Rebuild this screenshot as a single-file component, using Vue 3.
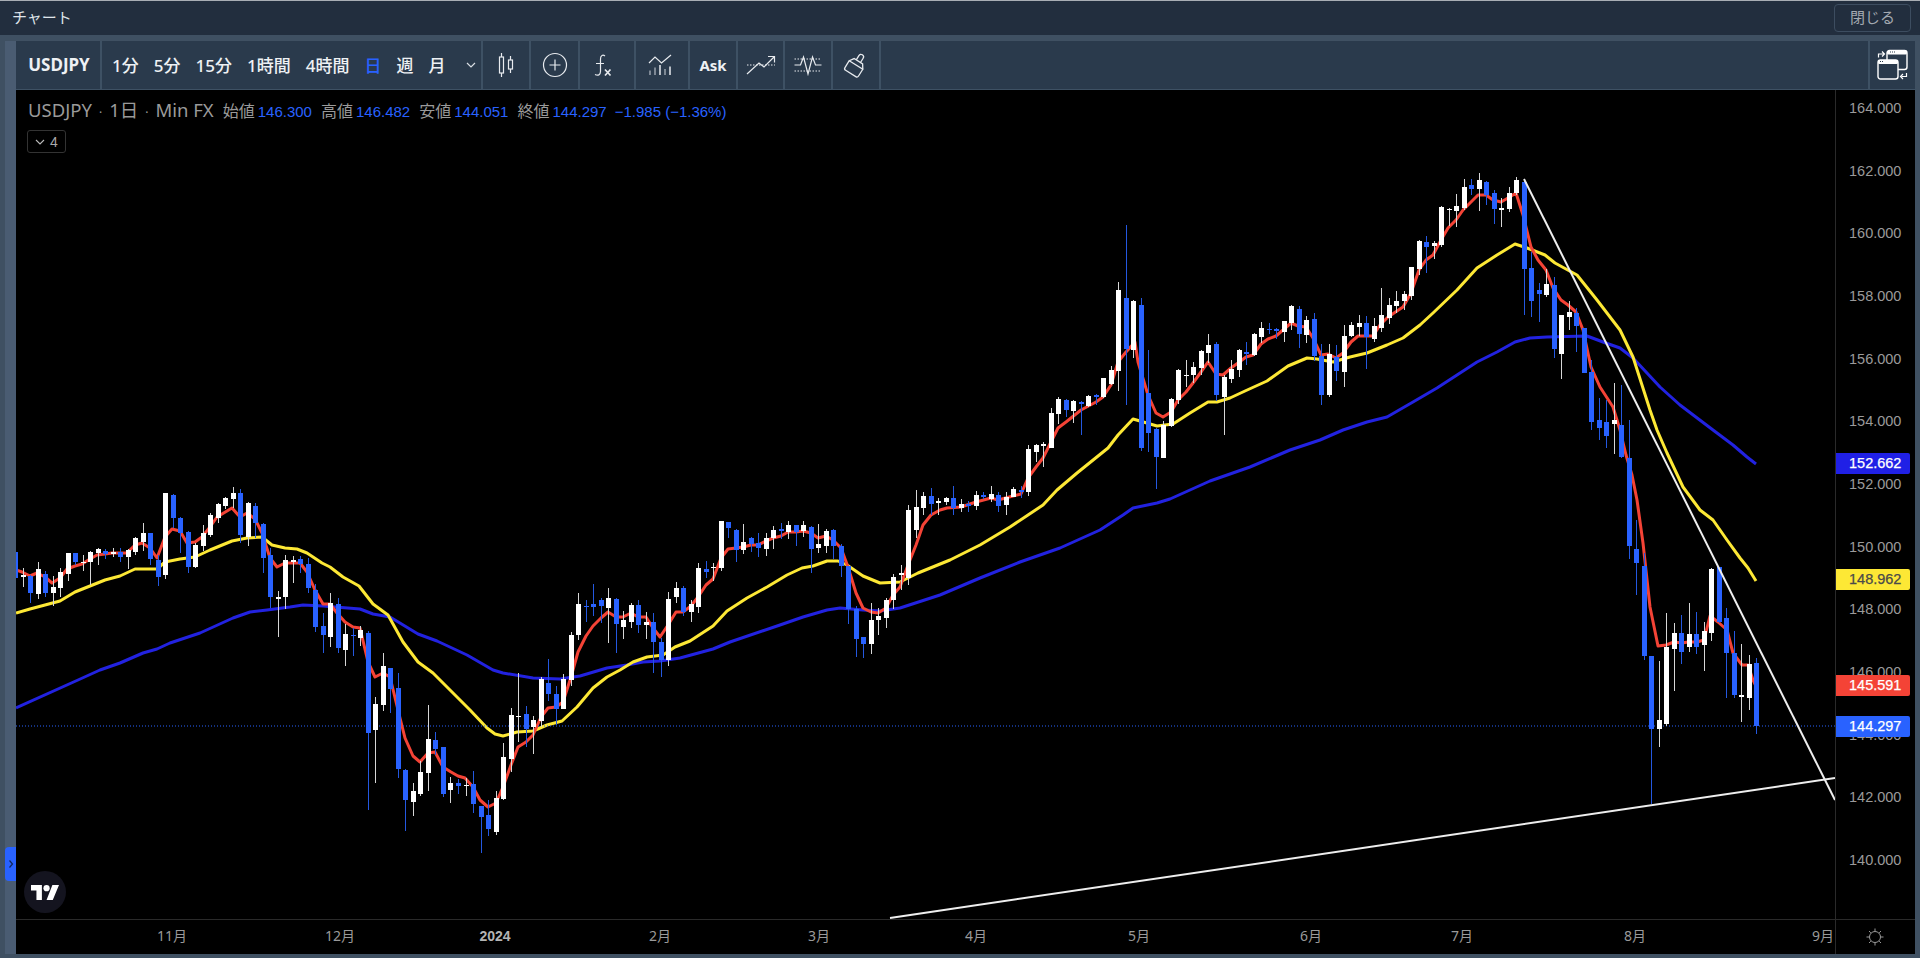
<template>
  <div class="app">
    <header class="titlebar">
      <span class="title">チャート</span>
      <button class="close-btn">閉じる</button>
    </header>

    <div class="frame">
      <div class="side">
        <div class="handle">
          <svg width="6" height="12" viewBox="0 0 6 12"><path d="M1.5 2.5 L4.5 6 L1.5 9.5" fill="none" stroke="#10255c" stroke-width="1.2" /></svg>
        </div>
      </div>

      <div class="main">
        <div class="toolbar">
          <div class="tb symbol">USDJPY</div>
          <div class="tb intervals">
            <span v-for="iv in intervals" :key="iv" :class="{ active: iv === '日' }">{{ iv }}</span>
            <svg class="chev" width="10" height="6" viewBox="0 0 10 6"><path d="M1 1 L5 5 L9 1" fill="none" stroke="#d8dde3" stroke-width="1.2" /></svg>
          </div>
          <div class="tb w48">
            <svg width="20" height="28" viewBox="0 0 20 28" class="ico">
              <path d="M5.5 2 V6 M5.5 22 V26 M14.5 5 V9 M14.5 18 V22" />
              <rect x="3.5" y="6" width="4" height="16" />
              <rect x="12.5" y="9" width="4" height="9" />
            </svg>
          </div>
          <div class="tb w49">
            <svg width="26" height="26" viewBox="0 0 26 26" class="ico">
              <circle cx="13" cy="13" r="11.5" />
              <path d="M13 7.5 V18.5 M7.5 13 H18.5" />
            </svg>
          </div>
          <div class="tb w56 fx-cell">
            <svg width="18" height="23" viewBox="0 0 18 23" class="ico">
              <path d="M11 2 C9 0.5 6.5 1 6.5 5 V17.5 C6.5 21 4 22 1 20.5 M2 9.5 H10" />
              <path d="M11 15.5 L16.5 21.5 M16.5 15.5 L11 21.5" stroke-width="1.7" />
            </svg>
          </div>
          <div class="tb w54 ind-cell">
            <svg width="24" height="22" viewBox="0 0 24 22" class="ico">
              <path d="M1 9 L7 3 L13.5 9 L23 1" />
              <path d="M2 16.5 V21 M7 13.5 V21" stroke="#9aa3ad" stroke-width="1.5" />
              <path d="M12 11 V21" stroke-width="1.5" />
              <path d="M17 15 V21" stroke="#9aa3ad" stroke-width="1.5" />
              <path d="M22 12.5 V21" stroke-width="1.5" />
            </svg>
          </div>
          <div class="tb w48 ask">Ask</div>
          <div class="tb w47">
            <svg width="30" height="20" viewBox="0 0 30 20" class="ico">
              <path d="M1 10 H29" stroke-dasharray="1.5 1.5" stroke-width="1" />
              <path d="M1 19 L13 8 L18 12 L28 2 M22 1.5 H28.5 V7.5" />
            </svg>
          </div>
          <div class="tb w48">
            <svg width="28" height="22" viewBox="0 0 28 22" class="ico">
              <path d="M0.5 5 H27.5 M0.5 17 H27.5" stroke-dasharray="1.5 1.5" stroke-width="1" />
              <path d="M0.5 11 H6.5 L9.5 3 L14 20 L18.5 3 L21.5 11 H27.5" />
            </svg>
          </div>
          <div class="tb w48">
            <svg width="26" height="28" viewBox="0 0 26 28" class="ico">
              <g transform="rotate(32 13 14)" stroke-width="1.3">
                <path d="M5 14 H21 V22 Q21 24 19 24 H7 Q5 24 5 22 Z" />
                <path d="M5 14 L8 9.5 H18 L21 14" />
                <path d="M10.5 9.5 V4.5 Q10.5 2 13 2 Q15.5 2 15.5 4.5 V9.5" />
              </g>
            </svg>
          </div>
          <div class="tb-fill"></div>
          <div class="tb layout">
            <svg width="32" height="32" viewBox="0 0 32 32">
              <rect x="10" y="1.5" width="20" height="19" rx="2.5" fill="#2a3a4c" stroke="#fff" stroke-width="1.4" />
              <rect x="10" y="1.5" width="20" height="4" rx="1.5" fill="#fff" />
              <rect x="1" y="11" width="20" height="19" rx="2.5" fill="#2a3a4c" stroke="#fff" stroke-width="1.4" />
              <rect x="1" y="11" width="20" height="4" rx="1.5" fill="#fff" />
              <path d="M3 12.5 H7 M13 3 H18" stroke="#2a3a4c" stroke-width="1" stroke-dasharray="1 1" />
              <path d="M1.5 8.5 V5 H6.5 M5 2.5 L7.5 5 L5 7.5" fill="none" stroke="#fff" stroke-width="1.2" />
              <path d="M29.5 24 V27.5 H24.5 M26 25 L23.5 27.5 L26 30" fill="none" stroke="#fff" stroke-width="1.2" />
            </svg>
          </div>
        </div>

        <div class="chart">
          <div class="pane">
            <svg class="plot" width="1819" height="829" viewBox="16 90 1819 829">
              <path :d="line(maSlow)" class="ma" stroke="#2222e0" />
              <path :d="line(maMid)" class="ma" stroke="#fde835" />
              <path :d="line(maFast)" class="ma" stroke="#f44336" />
              <path d="M16 726 H1835" stroke="#2962ff" stroke-width="1" stroke-dasharray="1 2" />
              <g v-for="c in candles" :key="c.i" shape-rendering="crispEdges">
                <rect :x="c.x" :y="c.hi" width="1" :height="c.lo - c.hi" :fill="c.up ? '#d6d6d6' : '#2458e0'" />
                <rect :x="c.x - 2" :y="c.top" width="5" :height="c.bot - c.top" :fill="c.up ? '#ffffff' : '#2962ff'" />
              </g>
              <path d="M1524 179 L1835 800" stroke="#eee" stroke-width="2" />
              <path d="M890 918 L1835 778" stroke="#eee" stroke-width="2" />
            </svg>

            <div class="legend">
              <span class="sym">USDJPY</span><i>·</i><span class="sym">1日</span><i>·</i><span class="sym">Min FX</span>
              <template v-for="v in ohlc" :key="v.k">
                <span class="k">{{ v.k }}</span><span class="v">{{ v.v }}</span>
              </template>
              <span class="v chg">−1.985 (−1.36%)</span>
            </div>
            <div class="collapse">
              <svg width="10" height="6" viewBox="0 0 10 6"><path d="M1 1 L5 5 L9 1" fill="none" stroke="#bbb" stroke-width="1.1" /></svg>
              <span>4</span>
            </div>

            <div class="tv-logo">
              <svg width="28" height="15" viewBox="0 0 36 19">
                <path d="M14 19 H7 V7 H0 V0 H14 Z M28 19 H20 L27.5 0 H36 Z" fill="#fff" />
                <circle cx="20" cy="4" r="4" fill="#fff" />
              </svg>
            </div>
          </div>

          <div class="price-axis">
            <span v-for="p in ticks" :key="p" class="tick" :style="{ top: priceTop(p) + 'px' }">{{ p.toFixed(3) }}</span>
            <span v-for="t in tags" :key="t.label" class="tag" :style="{ top: t.y + 'px', background: t.bg, color: t.fg }">{{ t.label }}</span>
          </div>

          <div class="time-axis">
            <span v-for="m in months" :key="m.t" :class="{ year: m.year }" :style="{ left: (m.x - 16) + 'px' }">{{ m.t }}</span>
          </div>

          <div class="corner">
            <svg width="20" height="20" viewBox="0 0 20 20" fill="none" stroke="#9a9a9a" stroke-width="1">
              <circle cx="10" cy="10" r="5.5" />
              <path d="M10 1.5 V4 M10 16 V18.5 M1.5 10 H4 M16 10 H18.5 M4 4 L5.8 5.8 M14.2 14.2 L16 16 M16 4 L14.2 5.8 M5.8 14.2 L4 16" />
            </svg>
          </div>
        </div>
      </div>
    </div>
  </div>
</template>

<script setup>
const intervals = ['1分', '5分', '15分', '1時間', '4時間', '日', '週', '月']

const ohlc = [
  { k: '始値', v: '146.300' },
  { k: '高値', v: '146.482' },
  { k: '安値', v: '144.051' },
  { k: '終値', v: '144.297' }
]

const ticks = [164, 162, 160, 158, 156, 154, 152, 150, 148, 146, 144, 142, 140]
const priceTop = (p) => 108 + (164 - p) * 31.33 - 90 - 9

const tags = [
  { label: '152.662', y: 363, bg: '#2020e6', fg: '#fff' },
  { label: '148.962', y: 479, bg: '#fde835', fg: '#4a4a4a' },
  { label: '145.591', y: 585, bg: '#f44336', fg: '#fff' },
  { label: '144.297', y: 626, bg: '#2962ff', fg: '#fff' }
]

const months = [
  { t: '11月', x: 172 },
  { t: '12月', x: 340 },
  { t: '2024', x: 495, year: true },
  { t: '2月', x: 660 },
  { t: '3月', x: 819 },
  { t: '4月', x: 976 },
  { t: '5月', x: 1139 },
  { t: '6月', x: 1311 },
  { t: '7月', x: 1462 },
  { t: '8月', x: 1635 },
  { t: '9月', x: 1823 }
]

// rows measured at 3x: [up, top, bottom, high, low], y = y0 + value / 3
const seg = (y0, rows) => rows.map(r => ({
  up: r[0] === 1,
  top: y0 + r[1] / 3,
  bot: y0 + Math.max(r[2], r[1] + 3) / 3,
  hi: y0 + r[3] / 3,
  lo: y0 + r[4] / 3
}))

const raw = [
  ...seg(480, [
    [0,215,295,215,295],[1,284,292,265,322],[0,287,340,285,368],[1,266,343,245,358],[0,282,340,272,350],
    [1,320,340,288,377],[1,275,325,265,352],[1,218,283,218,302],[0,218,245,218,255],[1,245,250,224,272],
    [1,215,247,212,314],[1,206,220,205,254],[0,212,222,208,236],[1,215,223,203,232],[0,215,230,203,245],
    [1,209,232,207,268],[1,175,215,172,224],[1,160,185,128,212],[0,160,238,160,255],[0,240,290,225,318],
    [1,40,286,40,296],[0,46,115,42,145],[0,113,158,110,220],[0,155,262,152,278],[1,194,260,190,265],
    [1,160,197,136,212],[1,105,166,100,170],[1,73,115,68,130],[1,55,77,50,87],[1,38,58,22,85],
    [0,40,165,28,190],[1,70,172,66,197],[0,77,130,68,175],[0,133,235,128,278],[0,224,350,205,385],
    [1,352,356,332,470],[1,241,352,224,388],[1,241,246,228,308],
    [0,237,253,228,280],[0,251,325,235,340],[0,330,440,312,456],[0,437,464,398,518],[1,368,470,340,500],
    [0,372,503,355,518],[1,461,509,432,557],[0,465,469,445,528],[1,449,473,437,497],[0,459,758,452,990],
    [1,672,749,650,908],[1,558,674,520,692],[0,564,627,563,698],[0,624,866,578,893],[0,870,960,868,1053],
    [1,933,965,908,1008],[1,876,942,842,948],[1,777,878,675,933],[0,780,807,755,825],[0,801,942,800,950],
    [1,909,930,890,968],[0,909,917,897,942],[1,915,919,895,948],[0,912,972,872,998],[0,978,1010,978,1118],
    [0,1005,1047,960,1067],[1,954,1056,932,1065],[1,831,957,790,960],[1,704,837,684,875],[1,708,712,578,786],
    [0,702,747,678,800],[1,720,742,708,822],[1,596,722,592,740],[0,609,641,537,662],[0,642,686,618,735],
    [1,597,686,582,687],[1,464,601,455,617],[1,371,465,338,480]
  ]),
  ...seg(500, [
    [0,317,320,300,365],[0,311,320,253,348],[0,299,317,295,368],[1,293,323,263,428],[0,297,371,295,458],
    [1,360,380,332,418],[1,314,365,310,383],[0,315,376,300,400],[1,365,376,335,418],[0,366,425,338,518],
    [0,425,480,415,530],[1,296,480,275,497],[1,264,290,245,310],[0,264,336,258,347],[1,311,337,300,365],
    [1,203,320,190,338],[0,206,215,182,235],[1,200,205,190,242],[1,62,203,62,212],[0,65,85,65,113],
    [0,90,150,88,185],[1,125,149,73,162],[0,113,133,112,155],[0,128,143,100,172],[1,113,147,100,168],
    [1,89,115,77,147],[0,88,93,68,116],[1,74,95,62,116],[0,74,97,74,137],[1,74,93,63,110],
    [0,80,148,78,218],[1,131,143,73,158],[1,92,139,87,158],[0,90,139,88,177],[0,137,197,133,230],
    [0,198,328,198,372],[0,327,416,318,472],[0,411,431,410,474],[1,360,431,310,462],[1,347,361,325,405],
    [1,299,355,295,384],[1,231,301,222,328],[1,218,226,195,270],[1,30,234,15,255]
  ]),
  ...seg(215, [
    [1,875,945,826,970],[1,842,880,832,900],[0,842,868,820,900],[1,859,864,850,900],[1,848,862,845,870],
    [0,848,880,812,900],[1,866,879,852,890],[0,866,872,858,890],[1,839,872,827,885],[0,840,847,830,852],
    [1,836,853,812,860],[0,840,873,830,892],[1,846,871,832,900],[1,821,845,815,845],[0,824,832,812,850],
    [1,703,832,690,842],[1,691,711,686,740],[1,687,692,680,755],[1,595,698,580,700],[1,552,598,545,628],
    [0,556,585,552,607],[1,559,589,555,625],[0,560,566,558,660],[1,542,574,540,575],[0,540,545,538,570],
    [1,490,547,488,548],[1,466,506,452,510],[1,226,468,202,528],[0,250,403,30,570],[1,259,405,255,430],
    [0,270,700,248,708],[0,533,655,406,712],[0,643,727,640,823],[1,630,730,618,730],[1,553,634,550,636],
    [1,466,555,463,568],[1,480,484,436,515],[1,455,481,442,505],[1,409,459,405,480]
  ]),
  ...seg(250, [
    [1,286,310,252,340],[0,283,435,275,452],[1,381,440,375,555],[1,356,388,330,400],[1,300,360,298,380],
    [0,307,311,277,345],[1,253,315,250,318],[1,235,260,217,278],[0,238,241,220,252],[0,238,242,235,268],
    [1,214,247,212,277],[1,168,220,166,240],[0,178,252,168,295],[1,211,256,198,278],[0,208,318,190,332],
    [0,318,436,283,466],[1,312,434,283,442],[0,322,363,285,392],[1,258,366,225,412],[1,226,257,216,262],
    [1,220,232,195,258],[0,220,262,198,358],[1,229,268,205,277],[1,196,234,113,246],[1,166,203,145,222],
    [1,154,168,124,188],[1,132,153,122,180],[1,52,138,50,150]
  ]),
  ...seg(160, [
    [1,243,327,240,345],[0,247,260,228,340],[1,250,258,243,298],[1,141,255,138,262],[1,146,150,145,198],
    [1,139,153,103,200],[1,82,145,58,150],[0,75,87,57,105],[1,61,87,40,152],[0,66,106,63,135],
    [0,100,147,90,192],[1,144,149,115,200],[1,100,147,80,155],[1,60,100,52,105],[0,66,327,56,465],
    [0,325,422,275,472],[0,390,402,370,485],[1,373,405,328,412],[0,376,568,352,595],[1,466,583,465,658],
    [1,457,471,423,510],[0,460,498,445,575],[0,505,640,505,640],[0,636,786,600,810],[0,780,804,714,840],
    [0,786,828,720,864],[1,780,792,669,882],[0,795,891,675,894]
  ]),
  ...seg(430, [
    [0,85,348,-30,388],[0,356,400,270,494],[0,407,678,370,690],[0,677,898,677,1122],[1,870,898,692,952],
    [1,650,882,548,888],[1,608,658,580,782],[0,608,665,555,703],[1,612,652,518,665],[0,612,652,545,672],
    [1,602,646,575,722],[1,416,610,414,632],[0,412,577,410,580],[0,564,670,533,805],[0,668,795,602,805],
    [1,795,800,642,875],[1,702,803,675,840],[0,698,888,683,913]
  ])
]

const candles = raw.map((c, i) => ({ ...c, i, x: Math.round(15.2 + i * 7.505) }))

const line = (pts) => 'M' + pts.map(p => p.join(' ')).join(' L')

const maFast = [
  [16,570],[22,572],[30,576],[37,573],[45,577],[52,583],[60,578],[67,569],[75,566],[82,564],[90,559],[97,555],
  [105,554],[112,553],[120,553],[127,553],[135,545],[142,543],[150,548],[157,558],[165,537],[172,529],[180,531],
  [187,543],[195,542],[202,537],[210,527],[217,517],[232,508],[240,517],[247,513],[255,519],[262,533],[270,558],
  [277,567],[285,563],[300,563],[307,572],[315,590],[323,604],[330,604],[337,613],[345,622],[353,627],[360,628],
  [368,662],[375,677],[383,673],[390,677],[398,710],[405,738],[413,756],[420,762],[428,753],[435,752],[443,767],
  [451,772],[458,776],[465,778],[473,787],[480,800],[488,807],[496,803],[503,787],[511,765],[518,747],[526,742],
  [533,735],[541,717],[548,708],[556,707],[563,702],[571,677],[578,652],[586,636],[593,626],[601,618],[608,612],
  [616,617],[623,617],[631,613],[638,617],[646,617],[653,628],[660,637],[668,625],[676,612],[683,612],[691,606],
  [698,597],[706,585],[713,579],[721,558],[728,549],[736,548],[743,547],[751,545],[758,545],[766,541],[773,538],
  [781,536],[788,532],[796,532],[803,531],[811,533],[818,538],[826,536],[833,540],[841,548],[848,567],[856,593],
  [863,608],[871,612],[878,613],[886,608],[893,595],[900,587],[908,565],[916,545],[923,525],[931,515],[940,510],
  [947,508],[961,507],[976,502],[991,498],[998,500],[1013,496],[1021,494],[1028,478],[1036,467],[1043,458],
  [1051,442],[1058,428],[1066,422],[1081,410],[1096,402],[1103,397],[1111,385],[1118,362],[1126,352],[1135,342],
  [1138,362],[1148,395],[1156,413],[1163,417],[1171,412],[1178,400],[1186,392],[1193,383],[1201,372],[1208,362],
  [1216,374],[1223,375],[1231,368],[1238,363],[1246,357],[1253,355],[1261,344],[1268,339],[1276,336],[1283,330],
  [1291,323],[1298,326],[1306,327],[1313,338],[1321,355],[1328,354],[1336,358],[1343,353],[1351,342],[1358,336],
  [1366,336],[1373,336],[1380,325],[1388,317],[1403,307],[1411,293],[1419,270],[1426,260],[1433,255],[1441,240],
  [1448,228],[1456,220],[1463,210],[1478,195],[1486,195],[1493,200],[1501,202],[1508,198],[1516,193],[1523,215],
  [1531,247],[1538,260],[1546,270],[1553,288],[1561,300],[1568,305],[1576,312],[1583,330],[1591,367],[1600,387],
  [1613,407],[1620,430],[1626,455],[1632,475],[1637,500],[1643,543],[1650,607],[1658,646],[1666,645],[1674,642],
  [1682,643],[1688,642],[1697,642],[1704,640],[1710,616],[1718,622],[1727,630],[1733,653],[1742,665],[1748,665],
  [1753,680],[1756,686]
]

const maMid = [
  [16,613],[30,609],[45,605],[60,601],[75,592],[90,586],[105,580],[120,576],[135,569],[157,569],[165,562],[180,559],
  [195,557],[210,550],[232,541],[247,538],[262,537],[272,545],[285,548],[297,549],[307,553],[322,563],[330,567],
  [343,577],[359,586],[373,604],[388,615],[403,642],[418,662],[433,673],[450,690],[470,710],[487,728],[495,734],
  [503,736],[517,732],[533,731],[547,725],[562,721],[577,707],[593,688],[607,677],[620,670],[633,662],[647,657],
  [663,655],[675,647],[690,641],[713,626],[727,611],[747,598],[767,587],[787,575],[802,568],[813,566],[827,561],
  [838,561],[847,565],[863,576],[880,583],[900,582],[918,573],[950,560],[980,545],[1010,527],[1028,515],[1043,505],
  [1057,490],[1077,473],[1108,448],[1118,435],[1133,419],[1140,421],[1157,426],[1173,424],[1190,413],[1208,402],
  [1217,402],[1230,398],[1245,391],[1267,381],[1288,366],[1307,358],[1317,359],[1333,362],[1350,357],[1367,353],
  [1387,345],[1403,338],[1420,325],[1433,313],[1457,290],[1477,268],[1497,255],[1515,244],[1527,248],[1545,255],
  [1555,263],[1577,275],[1597,300],[1620,330],[1633,357],[1650,410],[1657,430],[1667,453],[1683,487],[1700,510],
  [1713,520],[1727,540],[1740,558],[1748,568],[1756,581]
]

const maSlow = [
  [16,708],[78,680],[100,670],[120,663],[143,653],[157,649],[170,643],[200,633],[233,618],[250,612],[267,610],
  [290,607],[303,605],[323,606],[360,609],[373,614],[390,617],[418,634],[437,641],[467,655],[493,670],[503,673],
  [533,678],[560,679],[580,676],[607,668],[627,665],[643,662],[660,661],[680,658],[713,649],[730,642],[780,625],
  [803,617],[827,610],[840,608],[863,610],[880,611],[900,608],[940,595],[980,578],[1020,562],[1060,548],[1100,530],
  [1123,515],[1133,508],[1157,503],[1170,499],[1210,481],[1250,467],[1290,450],[1320,440],[1343,430],[1367,422],
  [1387,417],[1413,402],[1437,388],[1457,375],[1477,362],[1497,352],[1515,342],[1530,338],[1547,337],[1587,336],
  [1603,342],[1620,348],[1633,358],[1660,387],[1680,405],[1713,430],[1733,445],[1747,457],[1756,464]
]
</script>

<style scoped>
.app {
  width: 1920px;
  height: 958px;
  display: flex;
  flex-direction: column;
  background: #3f5062;
  overflow: hidden;
  font-family: "Noto Sans", "Noto Sans CJK JP", sans-serif;
}

.titlebar {
  height: 34px;
  border-top: 1px solid #a9aeb4;
  background: #222e3e;
  display: flex;
  align-items: center;
  justify-content: space-between;
  padding: 0 9px 0 12px;
  flex-shrink: 0;
}

.title {
  font-size: 15px;
  color: #dfe4ea;
  margin-bottom: 4px;
}

.close-btn {
  width: 77px;
  height: 28px;
  border: 1px solid #3d4d60;
  border-radius: 4px;
  background: transparent;
  color: #a3a9b1;
  font-family: inherit;
  font-size: 15px;
  padding: 0 0 3px;
}

.frame {
  flex: 1;
  display: flex;
  padding: 6px 5px 4px 5px;
  min-height: 0;
}

.side {
  width: 11px;
  background: #4a5c72;
  position: relative;
  flex-shrink: 0;
}

.handle {
  position: absolute;
  left: 0;
  top: 806px;
  width: 11px;
  height: 34px;
  background: #2962ff;
  border-radius: 4px 0 0 4px;
  display: flex;
  align-items: center;
  justify-content: center;
}

.main {
  flex: 1;
  display: flex;
  flex-direction: column;
  min-width: 0;
}

.toolbar {
  height: 48px;
  border-bottom: 1px solid #3e5164;
  background: #2a3a4c;
  display: flex;
  flex-shrink: 0;
}

.tb {
  display: flex;
  align-items: center;
  justify-content: center;
  border-right: 2px solid #3e5164;
  box-sizing: border-box;
  flex-shrink: 0;
  color: #eef1f4;
}

.symbol {
  width: 86px;
  font-size: 17px;
  font-weight: 700;
  padding: 0 0 2px 2px;
}

.intervals {
  width: 381px;
  justify-content: flex-start;
  padding: 0 0 2px 10px;
  gap: 15px;
  font-size: 17px;
  font-weight: 500;
}

.intervals .active {
  color: #2962ff;
}

.chev {
  margin-left: 6px;
  margin-top: 2px;
}

.w47 { width: 47px; }
.w48 { width: 48px; }
.w49 { width: 49px; }
.w54 { width: 54px; }
.w56 { width: 56px; }

.fx-cell {
  padding-right: 8px;
}

.ind-cell {
  padding-right: 5px;
}

.ask {
  font-size: 15px;
  font-weight: 700;
}

.ico {
  fill: none;
  stroke: #e8ebef;
  stroke-width: 1.2;
}

.tb-fill {
  flex: 1;
}

.layout {
  width: 47px;
  border-right: 0;
  border-left: 2px solid #3e5164;
}

.chart {
  flex: 1;
  display: grid;
  grid-template-columns: 1819px 80px;
  grid-template-rows: 829px 35px;
  background: #000;
  min-height: 0;
}

.pane {
  position: relative;
  overflow: hidden;
}

.plot {
  display: block;
}

.ma {
  fill: none;
  stroke-width: 3;
  stroke-linejoin: round;
}

.legend {
  position: absolute;
  left: 12px;
  top: 6px;
  display: flex;
  align-items: baseline;
  white-space: nowrap;
  color: #9a9a9a;
  font-size: 14px;
}

.legend i {
  font-style: normal;
  margin: 0 7px;
  font-size: 12px;
}

.sym {
  font-size: 18.5px;
}

.k {
  margin-left: 9px;
  margin-right: 3px;
  font-size: 16px;
}

.v {
  color: #2962ff;
  font-family: "Liberation Sans", sans-serif;
  font-size: 15px;
}

.chg {
  margin-left: 8px;
}

.collapse {
  position: absolute;
  left: 11px;
  top: 40px;
  width: 39px;
  height: 23px;
  box-sizing: border-box;
  border: 1px solid #333;
  border-radius: 3px;
  display: flex;
  align-items: center;
  justify-content: center;
  gap: 5px;
  color: #aaa;
  font-family: "Liberation Sans", sans-serif;
  font-size: 14px;
}

.tv-logo {
  position: absolute;
  left: 8px;
  top: 781px;
  width: 42px;
  height: 42px;
  border-radius: 50%;
  background: #14141f;
  display: flex;
  align-items: center;
  justify-content: center;
}

.price-axis {
  position: relative;
  border-left: 1px solid #2a2a2a;
  overflow: hidden;
  font-family: "Liberation Sans", sans-serif;
  font-size: 14.5px;
}

.tick {
  position: absolute;
  left: 13px;
  color: #9a9a9a;
  line-height: 18px;
}

.tag {
  position: absolute;
  left: 0;
  width: 74px;
  height: 21px;
  box-sizing: border-box;
  padding-left: 13px;
  line-height: 21px;
  border-radius: 0 2px 2px 0;
  font-weight: 500;
  -webkit-text-stroke: 0.25px currentColor;
}

.time-axis {
  position: relative;
  border-top: 1px solid #2a2a2a;
  overflow: hidden;
  color: #9a9a9a;
  font-size: 14px;
}

.time-axis span {
  position: absolute;
  top: 6px;
  white-space: nowrap;
  transform: translateX(-50%);
  line-height: 20px;
}

.time-axis .year {
  font-family: "Liberation Sans", sans-serif;
  font-weight: 700;
  color: #b4b4b4;
}

.corner {
  border-top: 1px solid #2a2a2a;
  border-left: 1px solid #2a2a2a;
  display: flex;
  align-items: center;
  justify-content: center;
  padding-right: 1px;
}
</style>
<style>
html, body {
  background: #3f5062;
}
</style>
